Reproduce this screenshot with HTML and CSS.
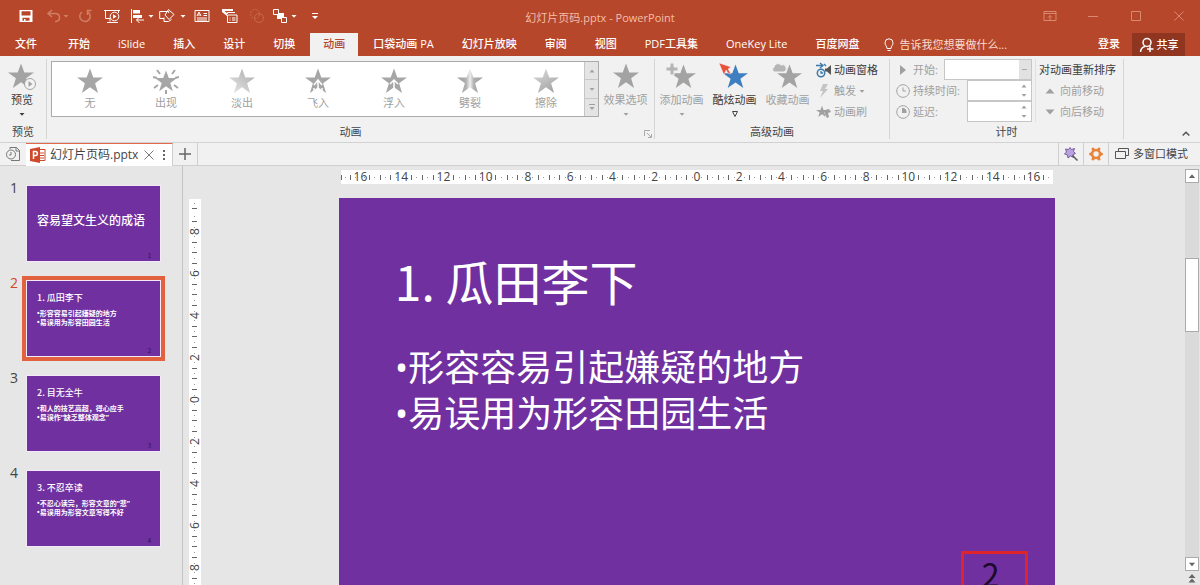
FILE: index.html
```html
<!DOCTYPE html>
<html lang="zh-CN">
<head>
<meta charset="utf-8">
<title>幻灯片页码.pptx - PowerPoint</title>
<link rel="stylesheet" href="styles.css">
</head>
<body>
<svg class="defs" aria-hidden="true">
  <defs>
    <linearGradient id="fade" x1="0" y1="1" x2="1" y2="0"><stop offset="0.2" stop-color="#dcdcdc"/><stop offset="1" stop-color="#a8a8a8"/></linearGradient>
    <linearGradient id="split"><stop offset="0" stop-color="#9f9f9f"/><stop offset="0.35" stop-color="#b0b0b0"/><stop offset="0.5" stop-color="#efefef"/><stop offset="0.65" stop-color="#b0b0b0"/><stop offset="1" stop-color="#9f9f9f"/></linearGradient>
    <linearGradient id="wipe" x1="0" y1="0" x2="0.6" y2="1"><stop offset="0" stop-color="#dedede"/><stop offset="1" stop-color="#a6a6a6"/></linearGradient>
    <symbol id="star" viewBox="0 0 26 26"><path d="M13 0.5l3.3 9H26l-7.9 5.8 3 9.7L13 19.2 4.900 25l3-9.700L0 9.500h9.700z"/></symbol>
    <symbol id="down" viewBox="0 0 8 8"><path d="M1.500 3h5L4 5.800z"/></symbol>
    <symbol id="up" viewBox="0 0 8 8"><path d="M1.500 5.500h5L4 2.500z"/></symbol>
  </defs>
</svg>

<header class="header">
  <div class="titlebar">
    <div class="quick">
      <button aria-label="保存"><svg class="i16" viewBox="0 0 16 16"><path fill="#fff" fill-rule="evenodd" d="M1.500 2h13v12h-13zM3.500 3.200v4.300h9V3.200zM4.500 9.800v3h1.500v-1.800h1.500v1.800h4V9.800z"/></svg></button>
      <button class="dim" aria-label="撤消"><svg class="i16" viewBox="0 0 16 16"><path class="line2" d="M6 2L2 5.500 6 9M2.500 5.500H9c6 0 6 8 0 8"/></svg><svg class="i8"><use href="#down"/></svg></button>
      <button class="dim" aria-label="重做"><svg class="i16" viewBox="0 0 16 16"><path class="line2" d="M5 4a5.200 5.200 0 1 0 5.500-.3M10.500 7V2.500h4"/></svg></button>
      <button aria-label="从头开始"><svg class="i16" viewBox="0 0 16 16"><path class="line" d="M0 2.500h16M1.500 3v7.500H6M14.500 3v2M6 10.500v3M3 14.500h5"/><circle class="line" cx="10.500" cy="8.500" r="4.300"/><path fill="#fff" d="M9 6.300v4.400l3.700-2.200zM7 14h7v1H7z"/></svg></button>
      <button aria-label="对齐"><svg class="i16" viewBox="0 0 16 16"><path class="line" d="M2.500 1v14M7.500 12H15M10.500 9l-3 3 3 3"/><path fill="#fff" d="M4 2h7v3.500H4zM4 7h9v3H4z"/></svg><svg class="i8 gap"><use href="#down"/></svg></button>
      <button aria-label="形状"><svg class="i16" viewBox="0 0 16 16"><path class="line" d="M5 10.500H.7v-7h9v1.500M9.500 1.500l5.500 5-5 5-4-4.500zM5 9.500v4h4.500l3-2"/></svg><svg class="i8 gap4"><use href="#down"/></svg></button>
      <button aria-label="文本框"><svg class="i16" viewBox="0 0 16 16"><path class="line" d="M1 2.500h14v11H1zM9.500 5.500H13M9.500 7.500H13M3 10h10M3 12h10M3 8l2-4 2 4M4 7h2"/></svg></button>
      <button aria-label="选择窗格"><svg class="i16" viewBox="0 0 16 16"><path fill="#fff" d="M0 1h11v2H2.500L5 5v3L0 4z"/><path class="line" d="M5.500 6V4.500H13M5.500 7h9.500v7.500H5.500zM7.500 10h1M10 10h3.500M7.500 12h1M10 12h3.500"/></svg></button>
      <button class="faint" aria-label="合并形状"><svg class="i16" viewBox="0 0 16 16"><circle class="line" cx="6" cy="6" r="4.500" stroke-dasharray="2 1"/><circle class="line" cx="10" cy="10" r="4.500"/></svg></button>
      <button aria-label="排列"><svg class="i16" viewBox="0 0 16 16"><path fill="#fff" d="M5 5h7v6H5z"/><path class="box" d="M1.500 1.500h5v5h-5zM9.500 9.500h5v5h-5z"/></svg><svg class="i8 gap"><use href="#down"/></svg></button>
      <button aria-label="自定义快速访问工具栏"><svg class="i8 tall" viewBox="0 0 8 10"><path fill="#fff" d="M1 2h6v1H1zM1 5h6L4 8z"/></svg></button>
    </div>
    <h1 class="title">幻灯片页码.pptx - PowerPoint</h1>
    <div class="winbtns">
      <button aria-label="功能区显示选项"><svg class="i16" viewBox="0 0 16 16"><path class="line" d="M2 3.500h12v9H2zM2 5.500h12M8 12V7.500M6 9.500l2-2 2 2"/></svg></button>
      <button aria-label="最小化"><svg class="i16" viewBox="0 0 16 16"><path class="line" d="M3 8.500h10"/></svg></button>
      <button aria-label="最大化"><svg class="i16" viewBox="0 0 16 16"><path class="line" d="M3.500 3.500h9v9h-9z"/></svg></button>
      <button aria-label="关闭"><svg class="i16" viewBox="0 0 16 16"><path class="line" d="M3.500 3.500l9 9M12.500 3.500l-9 9"/></svg></button>
    </div>
  </div>
  <nav class="tabs">
    <button class="tab file">文件</button><button class="tab">开始</button><button class="tab">iSlide</button><button class="tab">插入</button><button class="tab">设计</button><button class="tab">切换</button><button class="tab active">动画</button><button class="tab">口袋动画 PA</button><button class="tab">幻灯片放映</button><button class="tab">审阅</button><button class="tab">视图</button><button class="tab">PDF工具集</button><button class="tab">OneKey Lite</button><button class="tab">百度网盘</button>
    <label class="tell"><svg class="bulb" viewBox="0 0 10 14"><path class="line" d="M3 10.500C3 8 1 7.500 1 4.800a4 4 0 0 1 8 0C9 7.500 7 8 7 10.500zM3.500 12.500h3"/></svg><input type="text" aria-label="告诉我您想要做什么" placeholder="告诉我您想要做什么..."></label>
    <button class="login">登录</button>
    <button class="share"><svg class="i16" viewBox="0 0 16 16"><circle cx="8" cy="5.500" r="4" class="line2"/><path class="line2" d="M1.500 15c.3-3 2-5 4.500-5.500M11 9v6M8 12h6.500"/></svg>共享</button>
  </nav>
</header>

<section class="ribbon">
  <div class="group preview">
    <div class="content">
      <button class="big dark"><svg class="pic" viewBox="0 0 32 28"><use href="#star" x="2" y="0" width="26" height="26" fill="#a3a3a3"/><circle cx="24" cy="21" r="5.500" fill="#f4f4f4" stroke="#a3a3a3"/><path fill="#a3a3a3" d="M22.500 18v6l4-3z"/></svg><span>预览</span><svg class="i8"><use href="#down"/></svg></button>
    </div>
    <div class="name">预览</div>
  </div>
  <div class="group anim">
    <div class="content">
      <div class="gallery">
        <button class="item"><svg class="star"><use href="#star"/></svg>无</button>
        <button class="item"><svg class="star" viewBox="0 0 26 26"><use href="#star" x="2" y="2" width="22" height="22"/><path class="rays" d="M4 2l3 4M22 2l-3 4M0 9l4 1M26 9l-4 1M1 20l4-3M25 20l-4-3M13 22v4"/></svg>出现</button>
        <button class="item"><svg class="star" fill="url(#fade)"><use href="#star"/></svg>淡出</button>
        <button class="item"><svg class="star" viewBox="0 0 26 26"><use href="#star"/><path class="cut" d="M13 24V12M9 17l4-5 4 5M9 25v-5M17 25v-5"/></svg>飞入</button>
        <button class="item"><svg class="star" viewBox="0 0 26 26"><use href="#star"/><path class="cut" d="M13 21v-9M9 16l4-4 4 4"/></svg>浮入</button>
        <button class="item"><svg class="star" fill="url(#split)"><use href="#star"/></svg>劈裂</button>
        <button class="item"><svg class="star" fill="url(#wipe)"><use href="#star"/></svg>擦除</button>
        <div class="scroller"><button aria-label="上一行"><svg class="i8"><use href="#up"/></svg></button><button aria-label="下一行"><svg class="i8"><use href="#down"/></svg></button><button aria-label="更多"><svg class="i8" viewBox="0 0 8 8"><path d="M1 1h6v1H1zM1.500 4h5L4 7z"/></svg></button></div>
      </div>
      <button class="big"><svg class="pic" viewBox="0 0 32 28"><use href="#star" x="3" y="0" width="26" height="26" fill="#a3a3a3"/></svg><span>效果选项</span><svg class="i8"><use href="#down"/></svg></button>
    </div>
    <div class="name">动画</div>
    <button class="launcher" aria-label="动画设置"><svg class="i8" viewBox="0 0 8 8"><path d="M.5 6V.5H6M3 3l4 4M7.500 4v3.500H4" fill="none" stroke="#aaa"/></svg></button>
  </div>
  <div class="group adv">
    <div class="content">
      <button class="big"><svg class="pic" viewBox="0 0 32 28"><use href="#star" x="5" y="1" width="25" height="25" fill="#a3a3a3"/><path stroke="#f1f1f1" fill="#b5b5b5" d="M4 0h4v4h4v4H8v4H4V8H0V4h4z"/></svg><span>添加动画</span><svg class="i8"><use href="#down"/></svg></button>
      <button class="big dark"><svg class="pic" viewBox="0 0 32 28"><use href="#star" x="4" y="1" width="25" height="25" fill="#3f7fc0"/><path fill="#e8503a" stroke="#f1f1f1" stroke-width=".5" d="M0 0l12 4-3 2 3 5-3-1-2-3-2 5z"/></svg><span>酷炫动画</span><svg class="i8" viewBox="0 0 8 8"><path fill="none" stroke="#444" d="M1.500 1.500h5L4 6.500z"/></svg></button>
      <button class="big"><svg class="pic" viewBox="0 0 32 28"><use href="#star" x="5" y="1" width="25" height="25" fill="#a3a3a3"/><path stroke="#f1f1f1" fill="#b5b5b5" d="M2 9a3 3 0 0 1 0-5 4 4 0 0 1 7-2 3.500 3.500 0 0 1 3 7z"/></svg><span>收藏动画</span></button>
      <div class="stack">
        <button class="small dark"><svg class="i16" viewBox="0 0 16 16"><circle cx="5" cy="11" r="3.700" fill="none" stroke="#3c78a8" stroke-width="1.500"/><path d="M5 9v2h2M0 3.500h6M4 1l3 2.500L4 6M8 2l2 2" fill="none" stroke="#3c78a8" stroke-width="1.300"/><path fill="#555" d="M9 6.500h2l4-3.500v10l-4-3.500H9z"/></svg>动画窗格</button>
        <button class="small"><svg class="i16" viewBox="0 0 16 16"><path fill="#c4c4c4" d="M7 1h5L9 6h3l-8 9 3-7H4z"/></svg>触发<svg class="i8"><use href="#down"/></svg></button>
        <button class="small"><svg class="i16" viewBox="0 0 16 16"><use href="#star" x="0" y="1" width="12" height="13"/><path d="M9 6l4-1 2 3-3 1 1 4-2 1-2-4z"/></svg>动画刷</button>
      </div>
    </div>
    <div class="name">高级动画</div>
  </div>
  <div class="group timing">
    <div class="content">
      <div class="fields">
        <div class="field"><svg class="i14" viewBox="0 0 14 14"><path d="M4 2v10l6-5z"/></svg><label for="start">开始:</label><select id="start"><option></option></select></div>
        <div class="field"><svg class="i14" viewBox="0 0 14 14"><path class="clock" d="M7 .7a6.300 6.300 0 1 0 .1 0M7 3.500V7h3"/></svg><label for="dur">持续时间:</label><span class="spin"><input id="dur" type="text"><span><svg class="i8"><use href="#up"/></svg><svg class="i8"><use href="#down"/></svg></span></span></div>
        <div class="field"><svg class="i14" viewBox="0 0 14 14"><path class="clock" d="M7 .7a6.300 6.300 0 1 0 .1 0"/><path d="M6 3h1.500a4 4 0 0 1 3 4v1H6z"/></svg><label for="delay">延迟:</label><span class="spin"><input id="delay" type="text"><span><svg class="i8"><use href="#up"/></svg><svg class="i8"><use href="#down"/></svg></span></span></div>
      </div>
      <div class="order">
        <div class="heading">对动画重新排序</div>
        <button class="small"><svg class="i14" viewBox="0 0 14 14"><path d="M2.500 9.500h9L7 4.500z"/></svg>向前移动</button>
        <button class="small"><svg class="i14" viewBox="0 0 14 14"><path d="M2.500 4.500h9L7 9.500z"/></svg>向后移动</button>
      </div>
    </div>
    <div class="name">计时</div>
  </div>
  <button class="collapse" aria-label="折叠功能区"><svg class="i8" viewBox="0 0 8 8"><path d="M.7 5.500L4 2.200l3.300 3.300" fill="none" stroke="#555" stroke-width="1.500"/></svg></button>
</section>

<div class="docbar">
  <button class="history" aria-label="最近文档"><svg class="i16" viewBox="0 0 16 16"><path d="M5 3V1.500h6.500l3 3v10H6M11 1.500v3.500h3.500" fill="none" stroke="#777"/><circle cx="6" cy="8.500" r="4.500" fill="none" stroke="#777"/><path d="M6 6v3H4" fill="none" stroke="#777"/></svg></button>
  <div class="doc"><svg class="i16" viewBox="0 0 16 16"><path fill="#fff" stroke="#cf4a2a" d="M8 2.500h7v11H8z"/><path stroke="#cf4a2a" d="M10 6h4M10 8.500h4M10 11h4"/><path fill="#cf4a2a" d="M0 2l10-2v16L0 14z"/><path fill="none" stroke="#fff" stroke-width="1.500" d="M3.500 12V4.500h2c2.500 0 2.500 4 0 4h-2"/></svg><span>幻灯片页码.pptx</span><button aria-label="关闭文档"><svg class="i14" viewBox="0 0 14 14"><path d="M2.500 2.500l9 9M11.500 2.500l-9 9" stroke="#777"/></svg></button><button aria-label="文档菜单"><svg class="i8 tall" viewBox="0 0 8 10"><path fill="#666" d="M3 0h2v2H3zM3 4h2v2H3zM3 8h2v2H3z"/></svg></button></div>
  <button class="plus" aria-label="新建"><svg class="i14" viewBox="0 0 14 14"><path d="M7 1v12M1 7h12" stroke="#666" stroke-width="1.500"/></svg></button>
  <button class="tool first" aria-label="魔棒"><svg class="i16" viewBox="0 0 16 16"><path fill="#b9a2de" stroke="#765f9e" d="M7 1.500l1.500 2 3-1-1 3 2 2-2.500 1 .5 3-3-1.500L5 12l-.5-3-3-1 2-2-1-3 3 .5z"/><path stroke="#555" stroke-width="1.500" d="M9.500 9.500l5 5"/></svg></button>
  <button class="tool" aria-label="设置"><svg class="i16" viewBox="0 0 16 16"><circle cx="8" cy="8" r="4" fill="none" stroke="#e8843c" stroke-width="2.500"/><path stroke="#e8843c" stroke-width="3" stroke-linecap="round" d="M5 3l.6 1M11 3l-.6 1M5 13l.6-1M11 13l-.6-1M2.500 8h1M13.500 8h-1"/></svg></button>
  <button class="multi"><svg class="i14" viewBox="0 0 14 14"><path d="M3.500 4.500v-3h10v7h-3M.5 4.500h10v7H.5z" fill="none" stroke="#555"/></svg>多窗口模式</button>
</div>

<main class="work">
  <aside class="slides">
    <div class="row"><span class="num">1</span><div class="thumb cover"><b>容易望文生义的成语</b><i>1</i></div></div>
    <div class="row current"><span class="num">2</span><div class="thumb"><b>1. 瓜田李下</b><p>•形容容易引起嫌疑的地方<br>•易误用为形容田园生活</p><i>2</i></div></div>
    <div class="row"><span class="num">3</span><div class="thumb"><b>2. 目无全牛</b><p>•和人的技艺高超，得心应手<br>•易误作“缺乏整体观念”</p><i>3</i></div></div>
    <div class="row"><span class="num">4</span><div class="thumb"><b>3. 不忍卒读</b><p>•不忍心读完，形容文章的“悲”<br>•易误用为形容文章写得不好</p><i>4</i></div></div>
  </aside>
  <div class="vruler"><div class="vscale"><span class="end"></span><span>8</span><span>6</span><span>4</span><span>2</span><span>0</span><span>2</span><span>4</span><span>6</span><span>8</span><span class="end"></span></div></div>
  <div class="stage">
    <div class="hscale"><span>16</span><span>14</span><span>12</span><span>10</span><span>8</span><span>6</span><span>4</span><span>2</span><span>0</span><span>2</span><span>4</span><span>6</span><span>8</span><span>10</span><span>12</span><span>14</span><span>16</span></div>
    <article class="slide">
      <h2>1. 瓜田李下</h2>
      <p>•形容容易引起嫌疑的地方</p>
      <p>•易误用为形容田园生活</p>
      <div class="pageno">2</div>
    </article>
  </div>
  <div class="scrollbar">
    <button aria-label="向上滚动"><svg class="i10"><use href="#up"/></svg></button>
    <div class="track"><div class="handle"></div></div>
    <button aria-label="向下滚动"><svg class="i10"><use href="#down"/></svg></button>
    <button class="plain" aria-label="上一张幻灯片"><svg class="i8 tall" viewBox="0 0 8 10"><path d="M0.500 5L4 1l3.500 4zM.5 9.500L4 5.500l3.500 4z"/></svg></button>
  </div>
</main>
</body>
</html>
```

FILE: styles.css
```css
* { box-sizing: border-box; }
body {
  margin: 0;
  height: 100vh;
  display: flex;
  flex-direction: column;
  overflow: hidden;
  background: #e6e6e6;
  color: #444;
  font: 11px/16px "Open Sans", "Noto Sans CJK SC", sans-serif;
}
button, input, select { font: inherit; color: inherit; border: 0; padding: 0; margin: 0; background: none; }
button { display: flex; align-items: center; justify-content: center; white-space: nowrap; }
h1, h2, p { margin: 0; font-weight: 400; }
svg { flex: none; display: block; }
.defs { position: absolute; width: 0; height: 0; }
.i8 { width: 8px; height: 8px; fill: currentColor; }
.i8.tall { height: 10px; }
.i10 { width: 10px; height: 10px; fill: currentColor; }
.i14 { width: 14px; height: 14px; fill: currentColor; }
.i16 { width: 16px; height: 16px; fill: currentColor; }
.line { fill: none; stroke: currentColor; }
.line2 { fill: none; stroke: currentColor; stroke-width: 1.5; }

/* Header */
.header { flex: none; background: #b7472a; color: #fff; }
.titlebar { display: grid; grid-template-columns: 1fr auto 1fr; height: 33px; }
.quick {
  display: grid;
  grid-template-columns: 28px 31px 27px 25px 30px 35px 28px 27px 23px 39px 8px;
  padding: 0 0 2px 18px;
}
.quick button { justify-content: flex-start; }
.quick .dim { color: #d07f67; }
.quick .faint { color: #c8694f; }
.quick .box { fill: #b7472a; stroke: #fff; }
.gap { margin-left: 2px; }
.gap4 { margin-left: 4px; }
.title { align-self: center; font-size: 11px; line-height: 16px; padding-top: 2px; color: #f3bfa9; }
.winbtns { display: flex; justify-content: flex-end; gap: 27px; padding: 0 13px 2px 0; color: #d98970; }
.tabs { display: flex; height: 23px; gap: 2px; }
.tab { padding: 0 13px 2px; font-weight: 500; }
.tab.file { padding: 0 16px 1px 15px; }
.tab.active { background: #f1f1f1; color: #b7472a; }
.tell { display: flex; align-items: center; gap: 5px; flex: 1; padding-left: 10px; min-width: 0; }
.bulb { width: 10px; height: 14px; }
.tell input { flex: 1; min-width: 0; outline: 0; }
.tell input::placeholder { color: #f8dcd0; opacity: 1; }
.login { padding: 0 10px 1px; font-weight: 500; }
.share { width: 53px; gap: 2px; margin-right: 15px; background: #8f3520; font-weight: 500; }

/* Ribbon */
.ribbon { position: relative; flex: none; display: flex; height: 87px; background: #f1f1f1; border-bottom: 1px solid #d2d2d2; }
.group { position: relative; display: flex; flex-direction: column; margin: 3px 0; border-right: 1px solid #d5d5d5; }
.content { display: flex; height: 66px; color: #a0a0a0; }
.name { text-align: center; line-height: 14px; margin-top: 2px; }
.dark { color: #3b3b3b; }
.big { flex-direction: column; justify-content: flex-start; width: 53px; padding-top: 4px; }
.big .pic { width: 32px; height: 28px; margin-bottom: 1px; }
.big .i8 { margin-top: 2px; }
.preview { width: 47px; }
.preview .big { width: 44px; }
.anim { width: 608px; }
.gallery { display: flex; width: 548px; height: 56px; margin: 2px 0 0 4px; border: 1px solid #ababab; background: #fff; }
.item { flex: 1; flex-direction: column; justify-content: flex-start; padding-top: 6px; fill: #a6a6a6; }
.star { width: 26px; height: 26px; margin-bottom: 1px; }
.rays { stroke: #a6a6a6; stroke-width: 2; }
.cut { fill: none; stroke: #fff; stroke-width: 1.5; }
.scroller { display: flex; flex-direction: column; width: 14px; background: #e4e4e4; border-left: 1px solid #c6c6c6; }
.scroller button { flex: 1; }
.scroller button + button { border-top: 1px solid #c6c6c6; }
.launcher { position: absolute; right: 2px; bottom: 1px; }
.adv { width: 235px; }
.stack { display: flex; flex-direction: column; align-items: flex-start; padding-left: 2px; }
.small { height: 21px; gap: 2px; }
.timing { width: 234px; }
.timing .content { justify-content: space-between; padding: 0 7px 0 6px; }
.fields { width: 136px; }
.field { display: flex; align-items: center; height: 21px; gap: 3px; }
.field label { flex: 1; white-space: nowrap; }
.field select {
  appearance: none;
  width: 88px;
  height: 21px;
  border: 1px solid #c6c6c6;
  background: linear-gradient(#aaa, #aaa) right 4px center / 5px 1px no-repeat, linear-gradient(#e2e2e2, #e2e2e2) right / 12px 100% no-repeat, #fff;
}
.clock { fill: none; stroke: currentColor; }
.spin { display: flex; width: 65px; height: 21px; border: 1px solid #c6c6c6; background: #fff; }
.spin input { flex: 1; min-width: 0; }
.spin span { display: flex; flex-direction: column; justify-content: space-between; padding: 1px 3px 1px 0; }
.order { padding-left: 3px; align-self: flex-start; border-left: 1px solid #e0e0e0; }
.heading { line-height: 21px; color: #3b3b3b; white-space: nowrap; }
.order .small { padding-left: 4px; gap: 3px; }
.collapse { position: absolute; right: 10px; bottom: 4px; }

/* Document tabs */
.docbar { flex: none; display: flex; height: 23px; background: #f1f1f1; border-bottom: 1px solid #cfcfcf; }
.history { width: 26px; }
.doc { display: flex; align-items: center; width: 147px; padding: 0 4px; gap: 4px; background: #fff; border-top: 1px solid #e2694a; border-right: 1px solid #cfcfcf; font-size: 12px; margin-bottom: -1px; white-space: nowrap; }
.doc span { flex: 1; }
.plus { width: 25px; border-right: 1px solid #cfcfcf; }
.tool { width: 25px; border-left: 1px solid #cfcfcf; }
.tool.first { margin-left: auto; }
.multi { border-left: 1px solid #cfcfcf; padding: 0 12px 0 6px; gap: 4px; }

/* Workspace */
.work { flex: 1; min-height: 0; display: flex; }
.slides { width: 183px; flex: none; display: flex; flex-direction: column; gap: 18px; padding: 19px 0 0 10px; border-right: 1px solid #c4c4c4; overflow: hidden; }
.row { display: flex; gap: 6px; }
.num { width: 10px; font-size: 14px; line-height: 6px; }
.current .num { color: #d24726; }
.thumb { position: relative; width: 135px; height: 77px; padding: 10px 0 0 10px; background: #7030a0; border: 1px solid #f3e9f8; color: #fff; font-family: "Noto Sans CJK SC", sans-serif; white-space: nowrap; }
.thumb b { display: block; font-size: 9px; font-weight: 500; line-height: 14px; }
.thumb p { font: 700 7px/9px "Open Sans", "Noto Sans CJK SC", sans-serif; margin-top: 4px; }
.thumb i { position: absolute; right: 9px; bottom: 1px; font-size: 6px; font-style: normal; line-height: 8px; color: #2a1040; }
.thumb.cover { padding-top: 25px; }
.cover b { font-size: 12px; line-height: 18px; }
.current .thumb { outline: 4px solid #e2623f; }

.vruler { flex: none; width: 26px; padding: 33px 8px 0 6px; overflow: hidden; }
.vscale, .hscale { display: flex; background: #fff; font-size: 12px; }
.vscale { flex-direction: column; }
.vscale span {
  flex: none;
  height: 42px;
  display: flex;
  align-items: center;
  justify-content: center;
  writing-mode: vertical-rl;
  transform: rotate(180deg);
  background:
    linear-gradient(#666, #666) center 0 / 5px 1px no-repeat,
    linear-gradient(#666, #666) center 25% / 5px 1px no-repeat,
    linear-gradient(#666, #666) center 75% / 5px 1px no-repeat,
    linear-gradient(#999, #999) center 12% / 1px 1px no-repeat,
    linear-gradient(#999, #999) center 38% / 1px 1px no-repeat,
    linear-gradient(#999, #999) center 62% / 1px 1px no-repeat,
    linear-gradient(#999, #999) center 88% / 1px 1px no-repeat;
}
.vscale .end { height: 12px; background: linear-gradient(#666, #666) center 2px / 5px 1px no-repeat, linear-gradient(#999, #999) center 7px / 1px 1px no-repeat; }
.stage { flex: 1; min-width: 0; display: flex; flex-direction: column; align-items: center; }
.hscale { flex: none; width: 73%; height: 14px; margin-top: 4px; }
.hscale span {
  flex: 14 0 0;
  text-align: center;
  line-height: 14px;
  background:
    linear-gradient(#666, #666) 0 center / 1px 5px no-repeat,
    linear-gradient(#666, #666) 25% center / 1px 5px no-repeat,
    linear-gradient(#666, #666) 75% center / 1px 5px no-repeat,
    linear-gradient(#999, #999) 12% center / 1px 1px no-repeat,
    linear-gradient(#999, #999) 38% center / 1px 1px no-repeat,
    linear-gradient(#999, #999) 62% center / 1px 1px no-repeat,
    linear-gradient(#999, #999) 88% center / 1px 1px no-repeat;
}
.hscale span:first-child, .hscale span:last-child { flex-grow: 13; }
.slide { position: relative; flex: none; width: 73.4%; aspect-ratio: 16 / 9; margin-top: 14px; padding: 46px 56px; background: #7030a0; color: #fff; font-family: "Noto Sans CJK SC", sans-serif; }
.slide h2 { font-size: 48px; line-height: 72px; margin-bottom: 29px; }
.slide p { font-size: 36px; line-height: 46px; font-family: "Open Sans", "Noto Sans CJK SC", sans-serif; }
.pageno { position: absolute; right: 27px; bottom: 10px; width: 67px; height: 40px; border: 3px solid #e0242c; color: #1c0a2a; font-size: 32px; line-height: 38px; text-align: center; padding-right: 8px; }

.scrollbar { flex: none; display: flex; flex-direction: column; width: 14px; margin-right: 1px; padding: 3px 0 0; color: #666; }
.scrollbar button { height: 14px; background: #fff; border: 1px solid #ababab; }
.scrollbar .plain { background: none; border: 0; }
.track { flex: 1; background: #dadada; padding-top: 75px; }
.handle { height: 74px; background: #fff; border: 1px solid #ababab; }
```
